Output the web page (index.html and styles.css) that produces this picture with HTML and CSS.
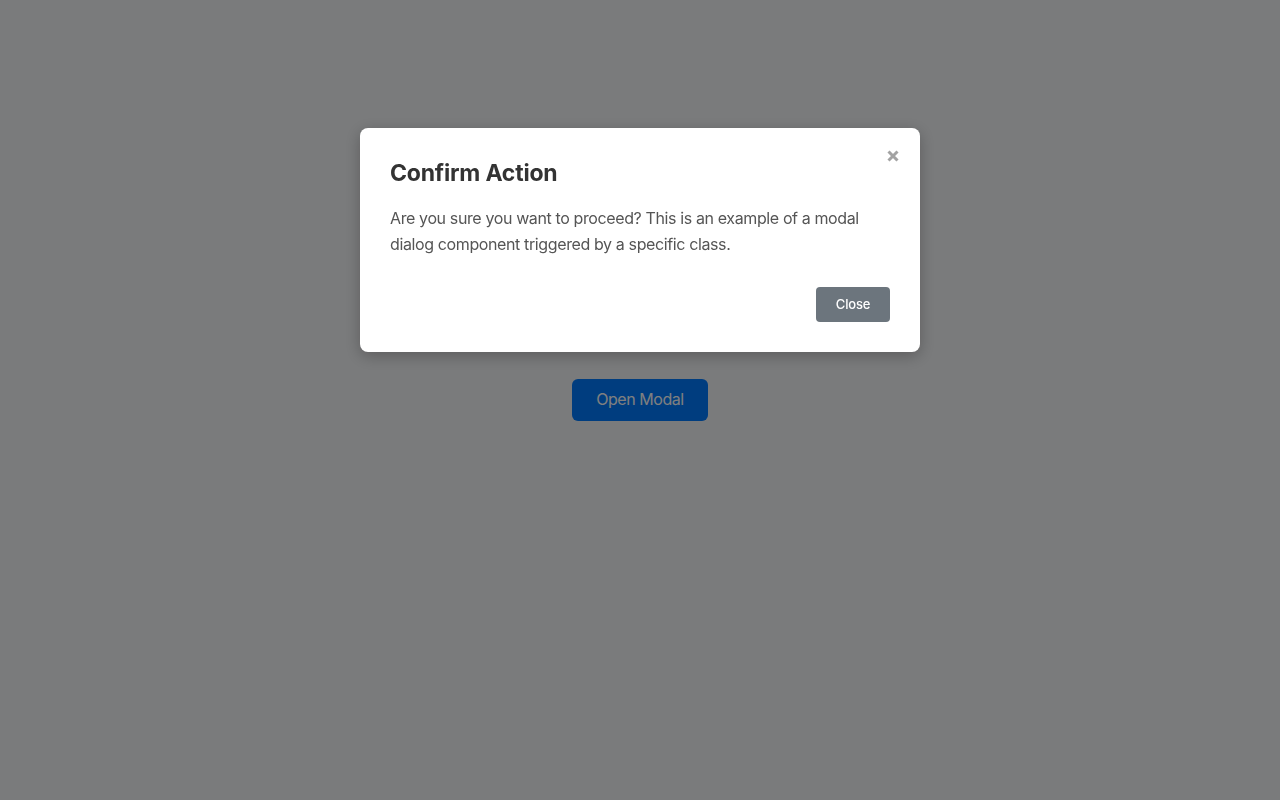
FILE: index.html
```html
<!DOCTYPE html>
<html lang="en">
<head>
<meta charset="utf-8">
<title>Modal</title>
<link rel="stylesheet" href="styles.css">
</head>
<body>
<button class="open-btn" type="button">Open Modal</button>
<div class="overlay">
  <div class="modal" role="dialog">
    <span class="modal-close" aria-label="Close">
      <svg width="12" height="12" viewBox="0 0 12 12"><path d="M1.5 1.5 L10.5 10.5 M10.5 1.5 L1.5 10.5" stroke="#a3a3a3" stroke-width="3" stroke-linecap="butt"/></svg>
    </span>
    <h2 class="modal-title">Confirm Action</h2>
    <p class="modal-text">Are you sure you want to proceed? This is an example of a modal dialog component triggered by a specific class.</p>
    <div class="modal-footer">
      <button class="close-btn" type="button">Close</button>
    </div>
  </div>
</div>
</body>
</html>
```
FILE: styles.css
```css
html, body {
  margin: 0;
  padding: 0;
}
body {
  font-family: Inter, "Liberation Sans", Arial, sans-serif;
  background: #f5f6f8;
  min-height: 100vh;
  display: flex;
  align-items: center;
  justify-content: center;
}
.open-btn {
  font-family: Inter, "Liberation Sans", Arial, sans-serif;
  font-size: 16px;
  letter-spacing: -0.45px;
  background: #007bff;
  color: #fff;
  border: none;
  border-radius: 6px;
  width: 136px;
  height: 42px;
  padding: 0 0 3px;
}
.overlay {
  position: fixed;
  inset: 0;
  background: rgba(0, 0, 0, 0.5);
}
.modal {
  position: relative;
  box-sizing: border-box;
  width: 560px;
  margin: 128px auto 0;
  background: #fff;
  border-radius: 8px;
  padding: 30px;
  box-shadow: 0 4px 16px rgba(0, 0, 0, 0.25);
}
.modal-close {
  position: absolute;
  top: 22px;
  right: 21px;
  width: 12px;
  height: 12px;
  display: block;
  line-height: 0;
}
.modal-title {
  margin: 0 0 17px;
  font-size: 23px;
  letter-spacing: -0.2px;
  font-weight: 700;
  color: #333;
  line-height: 30px;
}
.modal-text {
  margin: 0;
  font-size: 16px;
  letter-spacing: -0.38px;
  line-height: 26px;
  color: #555;
}
.modal-footer {
  display: flex;
  justify-content: flex-end;
  margin-top: 30px;
}
.close-btn {
  font-family: Inter, "Liberation Sans", Arial, sans-serif;
  font-size: 13px;
  font-weight: 500;
  letter-spacing: -0.2px;
  background: #6c757d;
  color: #fff;
  border: none;
  border-radius: 4px;
  width: 74px;
  height: 35px;
  padding: 0 0 2px;
}
```
